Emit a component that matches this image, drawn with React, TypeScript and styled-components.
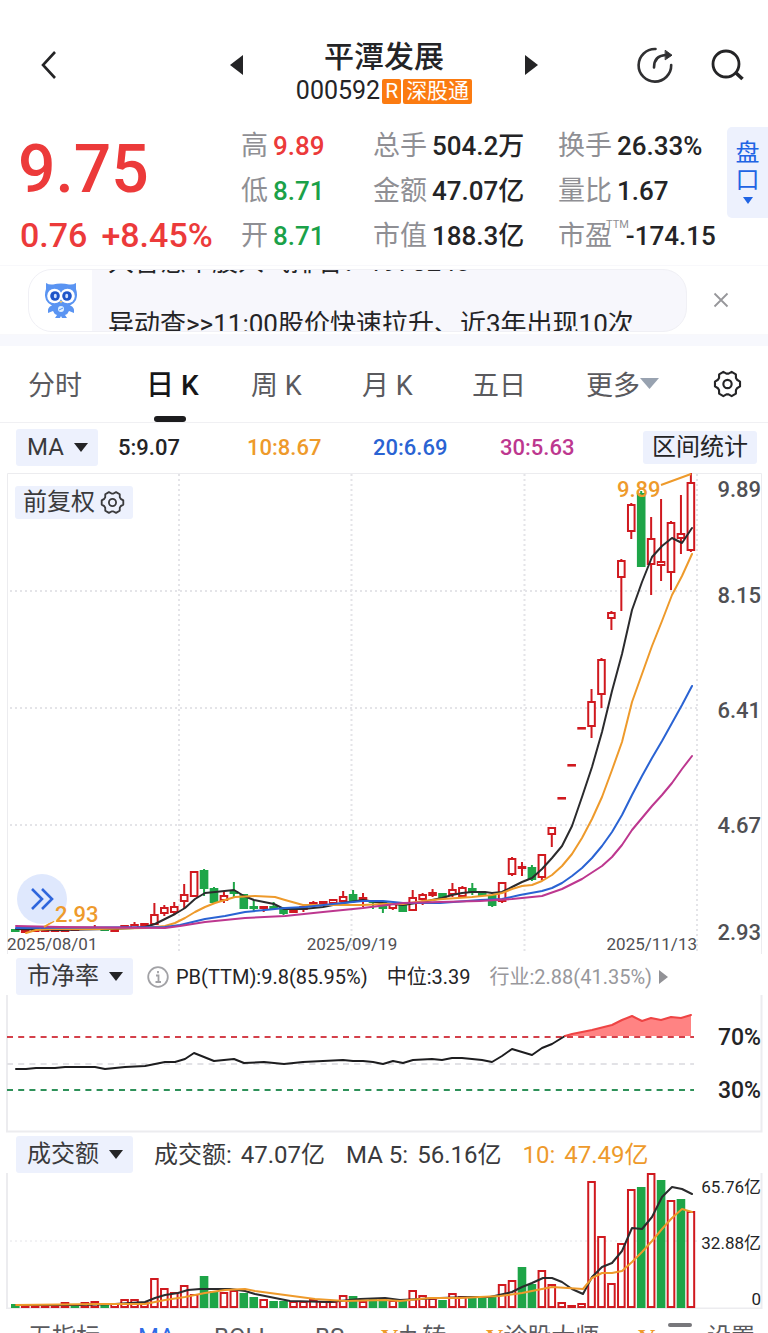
import React from "react";
import styled, { createGlobalStyle } from "styled-components";

const c = {
  ink: "#242426",
  text: "#3a3a3c",
  muted: "#8f8f94",
  axis: "#505054",
  red: "#ec3a3a",
  up: "#d0191f",
  green: "#1ba149",
  down: "#1ea548",
  orange: "#ee9a2b",
  blue: "#2a63d3",
  purple: "#bd378f",
  chip: "#edf1fd",
  line: "#ececef",
};

const Global = createGlobalStyle`
  *, *::before, *::after { box-sizing: border-box; }
  body {
    margin: 0;
    background: #fff;
    color: ${c.ink};
    font-family: Roboto, "Noto Sans CJK SC", sans-serif;
    font-size: 24px;
  }
  button, select { font: inherit; color: inherit; border: 0; padding: 0; margin: 0; background: none; cursor: pointer; }
  svg { display: block; }
`;

const Page = styled.main`
  width: 100%;
  overflow: hidden;
`;

/* ---------- header ---------- */

const Header = styled.header`
  display: grid;
  grid-template-columns: 1fr 308px 1fr;
  align-items: start;
  padding: 37px 24px 0;
`;

const IconGroup = styled.div<{ $end?: boolean }>`
  display: flex;
  justify-content: ${(p) => (p.$end ? "flex-end" : "flex-start")};
  gap: 36px;
  padding-left: ${(p) => (p.$end ? "0" : "14px")};
`;

const IconButton = styled.button`
  display: flex;
  align-items: center;
  justify-content: center;
  align-self: center;
  height: 56px;
`;

const Switcher = styled.div`
  display: flex;
  justify-content: space-between;

  > button { align-self: flex-start; }
`;

const Title = styled.h1`
  margin: 0;
  font-size: 30px;
  line-height: 40px;
  font-weight: 500;
  text-align: center;
`;

const CodeRow = styled.div`
  display: flex;
  align-items: center;
  justify-content: center;
  gap: 2px;
  height: 28px;
  font-size: 25px;
  line-height: 28px;
`;

const Badge = styled.span`
  padding: 0 3px;
  border-radius: 2px;
  background: #fb7b11;
  color: #fff;
  font-size: 21px;
  line-height: 25px;
`;

/* ---------- quote ---------- */

const Quote = styled.section`
  display: grid;
  grid-template-columns: 221fr 132fr 185fr 169fr 41px;
  padding: 19px 0 6px 20px;
`;

const Price = styled.div`
  color: ${c.red};
  font-size: 66px;
  line-height: 92px;
  font-weight: 500;
  margin-left: -2px;
`;

const Change = styled.div`
  display: flex;
  gap: 14px;
  color: ${c.red};
  font-size: 34px;
  line-height: 38px;
  font-weight: 500;
`;

const Stats = styled.dl`
  margin: 0;
`;

const Stat = styled.div`
  display: flex;
  height: 45px;
  line-height: 45px;
  white-space: nowrap;
`;

const StatLabel = styled.dt`
  color: ${c.muted};
  font-size: 27px;
`;

const StatValue = styled.dd<{ $color?: string }>`
  margin: 0;
  padding-left: 5px;
  color: ${(p) => p.$color ?? c.ink};
  font-size: 26px;
  font-weight: 500;
`;

const Ttm = styled.sup`
  margin: 5px -8px 0 -6px;
  color: ${c.muted};
  font-size: 11px;
  line-height: 12px;
`;

const OrderBook = styled.button`
  display: flex;
  flex-direction: column;
  align-items: center;
  height: 91px;
  margin-top: 3px;
  padding-top: 13px;
  border-radius: 5px 0 0 5px;
  background: ${c.chip};
  color: #2064e4;
  font-size: 24px;
  line-height: 27px;

  svg { margin-top: 3px; }
`;

/* ---------- notice ---------- */

const Notice = styled.section`
  display: flex;
  align-items: center;
  height: 70px;
  padding: 0 39px 0 28px;
  border: solid #f8f8fb;
  border-width: 1px 0;
`;

const NoticeCard = styled.div`
  display: flex;
  flex: 1;
  height: 63px;
  margin-right: 26px;
  overflow: hidden;
  border: 1px solid #f0f0f5;
  border-radius: 24px;
  background: #f7f7fc;
`;

const Mascot = styled.div`
  display: flex;
  align-items: center;
  justify-content: center;
  width: 63px;
  background: #fff;
`;

const Ticker = styled.div`
  flex: 1;
  height: 62px;
  margin-left: 16px;
  overflow: hidden;
  font-size: 26px;
  line-height: 36px;
  white-space: nowrap;
`;

const TickerTrack = styled.div`
  display: flex;
  flex-direction: column;
  gap: 26px;
  margin-top: -26px;
`;

const Band = styled.div`
  height: 11px;
  background: #f7f8fd;
`;

/* ---------- period tabs ---------- */

const Periods = styled.nav`
  display: grid;
  grid-template-columns: 118fr 105fr 111fr 110fr 114fr 127fr 29px;
  height: 77px;
  padding: 0 26px 0 28px;
  border-bottom: 1px solid #f0f0f3;
`;

const Period = styled.button<{ $active?: boolean }>`
  position: relative;
  display: flex;
  align-items: center;
  justify-self: start;
  padding-bottom: 2px;
  color: ${(p) => (p.$active ? "#161618" : "#5a5a5e")};
  font-size: ${(p) => (p.$active ? 28 : 27)}px;
  font-weight: ${(p) => (p.$active ? 500 : 400)};

  &::after {
    content: "";
    display: ${(p) => (p.$active ? "block" : "none")};
    position: absolute;
    bottom: 0;
    left: 50%;
    width: 32px;
    height: 6px;
    margin-left: -18px;
    border-radius: 3px;
    background: #1c1c1e;
  }
`;

/* ---------- indicator rows ---------- */

const Row = styled.div<{ $h: number; $top?: number }>`
  display: flex;
  align-items: center;
  height: ${(p) => p.$h}px;
  padding: ${(p) => p.$top ?? 0}px 11px 0 16px;
  white-space: nowrap;
`;

const PickerBox = styled.label<{ $w: number }>`
  position: relative;
  display: flex;
  align-items: center;
  flex: none;
  width: ${(p) => p.$w}px;
  height: 37px;
  border-radius: 3px;
  background: ${c.chip};

  select {
    appearance: none;
    width: 100%;
    height: 37px;
    padding-left: 11px;
    color: ${c.text};
    font-size: 24px;
    line-height: 37px;
  }
  svg {
    position: absolute;
    right: 10px;
    pointer-events: none;
  }
`;

const Averages = styled.div`
  display: grid;
  flex: 1;
  grid-template-columns: 129fr 126fr 127fr 143fr;
  padding-left: 20px;
  font-size: 22px;
  font-weight: 500;
`;

const Tint = styled.span<{ $color: string }>`
  color: ${(p) => p.$color};
`;

const RangeButton = styled.button`
  flex: none;
  height: 33px;
  padding: 0 9px;
  border-radius: 3px;
  background: ${c.chip};
  font-size: 24px;
  line-height: 33px;
`;

const Valuation = styled.div`
  display: flex;
  align-items: center;
  gap: 19px;
  padding-left: 14px;
  font-size: 20px;
  line-height: 36px;
`;

const WithIcon = styled.span<{ $muted?: boolean }>`
  display: flex;
  align-items: center;
  gap: 7px;
  color: ${(p) => (p.$muted ? "#98989c" : c.ink)};
`;

const Turnover = styled.div`
  display: flex;
  gap: 21px;
  padding-left: 21px;
  font-size: 24px;
  line-height: 36px;
`;

const Pair = styled.span<{ $color?: string }>`
  display: flex;
  gap: 9px;
  color: ${(p) => p.$color ?? c.text};
`;

/* ---------- charts ---------- */

const ChartBox = styled.figure`
  position: relative;
  margin: 0;

  > svg {
    width: 100%;
    height: auto;
  }
`;

const AdjustButton = styled.button`
  position: absolute;
  top: 14px;
  left: 15px;
  display: flex;
  align-items: center;
  gap: 5px;
  height: 33px;
  padding: 0 8px;
  border-radius: 3px;
  background: ${c.chip};
  font-size: 24px;
  line-height: 33px;
  color: ${c.text};
`;

const ExpandButton = styled.button`
  position: absolute;
  bottom: 30px;
  left: 17px;
  display: flex;
  align-items: center;
  justify-content: center;
  width: 50px;
  height: 50px;
  border-radius: 50%;
  background: #dfe8fd;
`;

const LowMark = styled.span`
  position: absolute;
  left: 55px;
  bottom: 26px;
  color: ${c.orange};
  font-size: 22px;
  font-weight: 500;
  line-height: 26px;
`;

/* ---------- bottom bar ---------- */

const BottomBar = styled.nav`
  display: grid;
  grid-template-columns: 110fr 76fr 101fr 66fr 105fr 152fr 30fr 39fr 50fr;
  height: 24px;
  padding: 13px 11px 0 28px;
  overflow: hidden;
`;

const BottomItem = styled.button<{ $active?: boolean }>`
  display: flex;
  justify-self: start;
  height: 30px;
  color: ${(p) => (p.$active ? "#2f6be6" : "#5a5a5e")};
  font-size: 24px;
  line-height: 30px;
  white-space: nowrap;
`;

const Vip = styled.b`
  color: ${c.orange};
  font-family: "Liberation Serif", serif;
`;

const Handle = styled.span`
  width: 24px;
  height: 4px;
  margin-top: 1px;
  border-radius: 2px;
  background: #77777b;
`;

/* ---------- icons ---------- */

const polar = (r: number, deg: number) => {
  const a = (deg * Math.PI) / 180;
  return `${(15 + r * Math.cos(a)).toFixed(2)} ${(15 + r * Math.sin(a)).toFixed(2)}`;
};

const gearPath =
  "M" +
  [0, 60, 120, 180, 240, 300]
    .map((a) => [polar(13.2, a - 11), polar(13.2, a + 11), polar(10.8, a + 24), polar(10.8, a + 36)].join(" L"))
    .join(" L") +
  " Z";

const Gear = ({ size, color = c.ink }: { size: number; color?: string }) => (
  <svg width={size} height={size} viewBox="0 0 30 30" fill="none" stroke={color} strokeWidth="2.2" strokeLinejoin="round" aria-hidden="true">
    <path d={gearPath} />
    <circle cx="15" cy="15" r="4.3" />
  </svg>
);

const Caret = ({ w = 14, h = 9, color = c.ink }: { w?: number; h?: number; color?: string }) => (
  <svg width={w} height={h} viewBox="0 0 14 9" preserveAspectRatio="none" aria-hidden="true">
    <path d="M0 0H14L7 9Z" fill={color} />
  </svg>
);

const Side = ({ w, h, left, color = c.ink }: { w: number; h: number; left?: boolean; color?: string }) => (
  <svg width={w} height={h} viewBox="0 0 10 16" preserveAspectRatio="none" aria-hidden="true">
    <path d={left ? "M10 0V16L0 8Z" : "M0 0V16L10 8Z"} fill={color} />
  </svg>
);

const Owl = () => (
  <svg width="38" height="40" viewBox="0 0 38 40" aria-hidden="true">
    <path d="M4 3Q7 5 11 4.500Q19 2.500 27 4.500Q31 5 34 3L34 9Q36 15 34 20Q32 24 28 25.500Q33 27 32 33L27 31Q26 34 23 35L25 38H20L19 36L18 38H13L15 35Q12 34 11 31L6 33Q5 27 10 25.500Q6 24 4 20Q2 15 4 9Z" fill="#5a94f2" />
    <circle cx="12.5" cy="16" r="7.3" fill="#fff" />
    <circle cx="25.5" cy="16" r="7.3" fill="#fff" />
    <circle cx="13" cy="16" r="4.8" fill="#1f55c9" />
    <circle cx="25" cy="16" r="4.8" fill="#1f55c9" />
    <ellipse cx="13.3" cy="16" rx="1.5" ry="2.3" fill="#cfe0ff" />
    <ellipse cx="24.7" cy="16" rx="1.5" ry="2.3" fill="#cfe0ff" />
    <path d="M17.500 21H20.500L19 23.500Z" fill="#f2c66d" />
    <circle cx="19" cy="29" r="3" fill="#dff0ff" />
    <path d="M17 30L21 28" stroke="#5a94f2" />
  </svg>
);

/* ---------- chart data ---------- */

const xAt = (i: number) => 15.3 + i * 9.935;

type Candle = [up: 0 | 1, top: number, bottom: number, high: number, low: number];

const candles: Candle[] = [
  [0, 458, 459, 458, 459], [1, 458, 460, 457, 461], [1, 457, 459, 457, 459], [1, 457, 459, 457, 459], [1, 457, 459, 457, 459],
  [1, 458, 459, 457, 459], [1, 457, 458, 456, 458], [1, 456, 457, 456, 458], [1, 456, 457, 453, 458], [0, 457, 458, 457, 458],
  [1, 458, 459, 458, 459], [1, 454, 456, 453, 457], [1, 453, 456, 450, 456], [1, 452, 454, 451, 455], [1, 443, 452, 431, 453],
  [1, 436, 441, 433, 444], [1, 435, 440, 430, 443], [1, 423, 429, 412, 436], [1, 400, 424, 399, 425], [0, 399, 416, 397, 424],
  [0, 417, 430, 415, 430], [1, 424, 428, 419, 431], [0, 420, 421, 410, 426], [0, 423, 436, 422, 437], [0, 435, 436, 428, 439],
  [1, 435, 436, 434, 440], [0, 435, 436, 430, 437], [0, 436, 441, 436, 443], [1, 438, 440, 437, 441], [1, 435, 437, 434, 440],
  [1, 431, 433, 429, 434], [1, 430, 432, 429, 433], [1, 428, 431, 428, 432], [1, 425, 429, 419, 430], [0, 423, 429, 418, 431],
  [1, 426, 427, 421, 435], [0, 429, 430, 428, 437], [0, 431, 436, 430, 441], [1, 432, 436, 431, 438], [0, 433, 439, 432, 439],
  [1, 426, 438, 418, 439], [1, 423, 427, 421, 433], [1, 421, 423, 417, 425], [0, 422, 426, 421, 427], [1, 418, 422, 411, 425],
  [1, 416, 424, 414, 426], [0, 417, 419, 411, 423], [0, 421, 423, 420, 424], [0, 424, 433, 423, 435], [1, 411, 429, 410, 431],
  [1, 387, 402, 385, 404], [1, 395, 396, 390, 404], [0, 396, 407, 393, 409], [1, 383, 405, 382, 408], [1, 356, 362, 355, 375],
  [1, 326, 326, 325, 327], [1, 293, 293, 292, 294], [1, 256, 256, 256, 257], [1, 230, 254, 217, 266], [1, 188, 222, 186, 236],
  [1, 141, 146, 139, 158], [1, 89, 105, 87, 139], [1, 33, 59, 31, 67], [0, 22, 94, 19, 95], [1, 67, 92, 45, 123],
  [1, 90, 93, 27, 109], [1, 51, 100, 49, 118], [1, 62, 66, 23, 82], [1, 11, 78, 1, 80],
];

const ma5 = "16,457 60,458 110,457 135,456 145,455 155,452 165,447 175,442 185,436 195,427 205,421 215,420 234,418 244,424 254,428 264,430 274,432 284,437 303,437 323,435 343,431 363,428 383,431 403,433 423,430 432,428 442,426 452,423 462,421 472,420 485,420 492,421 502,420 512,415 522,410 532,406 542,397 552,386 562,374 572,354 582,325 592,295 602,260 612,219 622,182 632,138 642,110 652,85 662,74 672,66 682,71 692,56";
const ma10 = "26,461 36,458 50,457 100,457 145,456 165,454 175,451 185,446 195,440 205,435 215,431 225,428 235,425 255,424 275,425 285,428 303,433 330,433 363,433 383,432 403,432 423,429 443,427 472,425 492,423 502,421 512,417 522,414 532,413 542,409 552,403 562,394 572,382 582,366 592,347 602,325 612,298 622,270 632,230 642,202 652,174 662,149 672,123 682,104 692,82";
const ma20 = "16,456 165,455 180,453 205,447 225,444 245,440 265,438 285,436 305,435 333,432 363,429 383,429 403,431 440,431 480,428 502,427 520,423 542,419 552,416 562,411 572,404 582,396 592,386 602,374 612,360 622,343 632,323 642,304 652,286 662,269 672,251 682,233 692,214";
const ma30 = "16,454 60,455 165,456 180,454 205,450 245,446 285,444 323,440 363,436 403,431 440,430 480,429 512,427 542,424 562,417 582,407 602,394 612,385 622,373 632,358 642,346 652,334 662,323 672,311 682,297 692,284";

const volumes: [up: 0 | 1, height: number][] = [
  [0, 3], [1, 3], [1, 3], [1, 3], [1, 3], [1, 5], [0, 3], [1, 5], [1, 6], [0, 3], [1, 4], [1, 8], [1, 8], [1, 5],
  [1, 29], [1, 19], [1, 15], [1, 22], [1, 13], [0, 31], [0, 16], [1, 15], [1, 17], [0, 14], [0, 10], [1, 8], [0, 6],
  [0, 6], [1, 6], [1, 6], [1, 8], [1, 6], [1, 6], [1, 12], [0, 11], [1, 6], [0, 8], [0, 8], [1, 7], [0, 6], [1, 17],
  [1, 12], [1, 9], [0, 7], [1, 14], [1, 11], [0, 10], [0, 9], [0, 10], [1, 23], [1, 27], [0, 40], [0, 23], [1, 37],
  [1, 23], [1, 5], [1, 2], [1, 4], [1, 126], [1, 71], [1, 24], [1, 64], [1, 118], [0, 120], [1, 134], [0, 127],
  [1, 107], [0, 108], [1, 96],
];

const vol5 = "16,132 80,132 115,131 145,129 155,125 165,122 178,120 188,117 200,116 230,116 245,118 255,121 265,123 290,128 330,129 360,126 385,125 400,127 440,125 470,124 490,124 512,119 522,114 532,110 543,105 552,105 562,109 572,116 583,121 592,104 602,94 612,90 622,78 632,55 642,56 652,44 662,24 672,14 682,16 692,21";
const vol10 = "16,132 100,131 145,131 165,127 185,124 205,120 225,117 245,116 255,118 285,122 315,126 345,128 385,127 400,128 430,125 460,125 500,123 522,120 552,114 583,116 592,105 602,100 612,100 622,98 632,89 642,79 652,68 662,56 672,45 682,36 692,39";

const pbBase = "16,74 26,74 36,73 55,73 65,72 95,72 105,74 125,72 145,71 155,69 165,67 175,67 185,64 194,58 204,62 214,66 224,65 234,64 244,68 264,67 284,69 303,67 323,66 343,65 353,66 363,66 373,67 383,69 393,66 403,68 413,65 432,64 442,65 452,63 462,63 482,65 492,67 502,61 512,54 522,57 532,60 542,53 552,49 565,41";
const pbHigh = "565,41 572,39 592,35 612,30 622,25 632,21 642,26 651,23 661,25 671,22 681,23 691,20";

const AxisText = styled.text<{ $size: number; $color?: string; $weight?: number }>`
  font-family: Roboto, "Noto Sans CJK SC", sans-serif;
  font-size: ${(p) => p.$size}px;
  font-weight: ${(p) => p.$weight ?? 400};
  fill: ${(p) => p.$color ?? c.axis};
`;

const Curve = styled.polyline<{ $color: string }>`
  fill: none;
  stroke: ${(p) => p.$color};
  stroke-width: 2;
  stroke-linejoin: round;
  stroke-linecap: round;
`;

const priceTicks: [string, number][] = [["9.89", 25], ["8.15", 131], ["6.41", 246], ["4.67", 361], ["2.93", 468]];

const PriceChart = () => (
  <svg viewBox="0 0 768 482" role="img" aria-label="日K线图">
    <path d="M7.500 482V1.500H761.500V482" stroke={c.line} fill="none" />
    <path d="M10 119H697M10 236H697M10 353H697M179 2V482M351.500 2V482M524.500 2V482M697 2V482" fill="none" stroke="#e4e4e8" strokeWidth="2" strokeDasharray="2 3" />
    {candles.map(([up, top, bottom, high, low], i) => {
      const x = xAt(i);
      const tone = up ? c.up : c.down;
      return (
        <g key={i} stroke={tone} strokeWidth="2">
          <path d={`M${x} ${high}V${top}M${x} ${bottom}V${low}`} />
          <rect x={x - 3.3} y={top} width="6.6" height={Math.max(bottom - top, 0.6)} fill={up ? "#fff" : tone} />
        </g>
      );
    })}
    <Curve $color="#2b2b2d" points={ma5} />
    <Curve $color={c.orange} points={ma10} />
    <Curve $color={c.blue} points={ma20} />
    <Curve $color={c.purple} points={ma30} />
    <path d="M661 13L691 2M44 455L54 449" stroke={c.orange} strokeWidth="2" />
    <AxisText x="617" y="25" $size={22} $weight={500} $color={c.orange}>9.89</AxisText>
    {priceTicks.map(([t, y]) => (
      <AxisText key={t} x="761" y={y} textAnchor="end" $size={22} $weight={500}>{t}</AxisText>
    ))}
    <AxisText x="7" y="478" $size={17}>2025/08/01</AxisText>
    <AxisText x="352" y="478" textAnchor="middle" $size={17}>2025/09/19</AxisText>
    <AxisText x="697" y="478" textAnchor="end" $size={17}>2025/11/13</AxisText>
  </svg>
);

const ValuationChart = () => (
  <svg viewBox="0 0 768 138" role="img" aria-label="市净率走势">
    <path d="M7 0V136.500H761.500V0" fill="none" stroke={c.line} strokeWidth="2" />
    <polygon points={`${pbHigh} 691,41`} fill="#ff8383" />
    <g strokeWidth="2" strokeDasharray="6 5.2">
      <path d="M7 42H694" stroke="#d4404a" />
      <path d="M7 69H694" stroke="#e2e2e6" />
      <path d="M7 95H694" stroke="#2e9159" />
    </g>
    <Curve $color="#1d1d1f" points={pbBase} />
    <Curve $color="#ee4444" points={pbHigh} />
    <AxisText x="761" y="50" textAnchor="end" $size={23} $weight={500} $color={c.ink}>70%</AxisText>
    <AxisText x="761" y="103" textAnchor="end" $size={23} $weight={500} $color={c.ink}>30%</AxisText>
  </svg>
);

const VolumeChart = () => (
  <svg viewBox="0 0 768 136" role="img" aria-label="成交额柱状图">
    <path d="M7 0V135.500H761.500V0" fill="none" stroke={c.line} strokeWidth="2" />
    <path d="M10 68H697" stroke="#e4e4e8" strokeDasharray="2 3" />
    {volumes.map(([up, h], i) => {
      const tone = up ? c.up : c.down;
      return (
        <rect key={i} x={xAt(i) - 3.3} y={135 - h} width="6.6" height={h - 1} fill={up ? "#fff" : tone} stroke={tone} strokeWidth="2" />
      );
    })}
    <Curve $color="#2b2b2d" points={vol5} />
    <Curve $color={c.orange} points={vol10} />
    <AxisText x="761" y="20" textAnchor="end" $size={17} $color={c.ink}>65.76亿</AxisText>
    <AxisText x="761" y="76" textAnchor="end" $size={17} $color={c.ink}>32.88亿</AxisText>
    <AxisText x="761" y="132" textAnchor="end" $size={17} $color={c.ink}>0</AxisText>
  </svg>
);

const Picker = ({ label, width, options }: { label: string; width: number; options: string[] }) => (
  <PickerBox $w={width}>
    <select aria-label={label} defaultValue={options[0]}>
      {options.map((o) => (
        <option key={o}>{o}</option>
      ))}
    </select>
    <Caret />
  </PickerBox>
);

const statColumns: { label: string; value: string; color?: string; ttm?: boolean }[][] = [
  [
    { label: "高", value: "9.89", color: c.red },
    { label: "低", value: "8.71", color: c.green },
    { label: "开", value: "8.71", color: c.green },
  ],
  [
    { label: "总手", value: "504.2万" },
    { label: "金额", value: "47.07亿" },
    { label: "市值", value: "188.3亿" },
  ],
  [
    { label: "换手", value: "26.33%" },
    { label: "量比", value: "1.67" },
    { label: "市盈", value: "-174.15", ttm: true },
  ],
];

export default function App() {
  return (
    <>
      <Global />
      <Page>
        <Header>
          <IconGroup>
            <IconButton aria-label="返回">
              <svg width="22" height="30" viewBox="0 0 22 30" fill="none" stroke={c.ink} strokeWidth="2.6" aria-hidden="true">
                <path d="M17 2L5 15L17 28" />
              </svg>
            </IconButton>
          </IconGroup>
          <Switcher>
            <IconButton aria-label="上一只"><Side w={13} h={20} left /></IconButton>
            <div>
              <Title>平潭发展</Title>
              <CodeRow>
                <span>000592</span>
                <Badge>R</Badge>
                <Badge>深股通</Badge>
              </CodeRow>
            </div>
            <IconButton aria-label="下一只"><Side w={13} h={20} /></IconButton>
          </Switcher>
          <IconGroup $end>
            <IconButton aria-label="分享">
              <svg width="38" height="38" viewBox="0 0 38 38" fill="none" stroke="#303032" strokeWidth="2.6" strokeLinecap="round" aria-hidden="true">
                <path d="M19.500 3A16.300 16.300 0 1 0 35.200 19" />
                <path d="M18 21.500C18 14 21.500 9.500 29.500 9" />
                <path d="M29.500 4.500L36 9.200L29.500 13.600Z" fill="#303032" strokeWidth="1" />
              </svg>
            </IconButton>
            <IconButton aria-label="搜索">
              <svg width="34" height="34" viewBox="0 0 34 34" fill="none" stroke={c.ink} strokeWidth="2.8" aria-hidden="true">
                <circle cx="16" cy="16" r="13" />
                <path d="M25.500 24.500L32.500 31" strokeWidth="3.6" />
              </svg>
            </IconButton>
          </IconGroup>
        </Header>

        <Quote>
          <div>
            <Price>9.75</Price>
            <Change><span>0.76</span><span>+8.45%</span></Change>
          </div>
          {statColumns.map((col, i) => (
            <Stats key={i}>
              {col.map((s) => (
                <Stat key={s.label}>
                  <StatLabel>{s.label}</StatLabel>
                  {s.ttm && <Ttm>TTM</Ttm>}
                  <StatValue $color={s.color}>{s.value}</StatValue>
                </Stat>
              ))}
            </Stats>
          ))}
          <OrderBook>
            <span>盘</span>
            <span>口</span>
            <Caret w={10} h={7} color="#2064e4" />
          </OrderBook>
        </Quote>

        <Notice>
          <NoticeCard>
            <Mascot><Owl /></Mascot>
            <Ticker>
              <TickerTrack>
                <div>大智慧个股人气排名：1978240</div>
                <div>异动查&gt;&gt;11:00股价快速拉升、近3年出现10次</div>
              </TickerTrack>
            </Ticker>
          </NoticeCard>
          <IconButton aria-label="关闭">
            <svg width="16" height="16" viewBox="0 0 16 16" stroke="#97979b" strokeWidth="1.8" aria-hidden="true">
              <path d="M1.500 1.500L14.500 14.500M14.500 1.500L1.500 14.500" />
            </svg>
          </IconButton>
        </Notice>
        <Band />

        <Periods>
          <Period>分时</Period>
          <Period $active>日 K</Period>
          <Period>周 K</Period>
          <Period>月 K</Period>
          <Period>五日</Period>
          <Period>更多<Caret w={19} h={11} color="#98a2b0" /></Period>
          <IconButton aria-label="设置"><Gear size={30} /></IconButton>
        </Periods>

        <Row $h={49}>
          <Picker label="主图指标" width={82} options={["MA", "BOLL"]} />
          <Averages>
            <span>5:9.07</span>
            <Tint $color={c.orange}>10:8.67</Tint>
            <Tint $color={c.blue}>20:6.69</Tint>
            <Tint $color={c.purple}>30:5.63</Tint>
          </Averages>
          <RangeButton>区间统计</RangeButton>
        </Row>

        <ChartBox>
          <PriceChart />
          <AdjustButton>前复权<Gear size={25} color={c.text} /></AdjustButton>
          <ExpandButton aria-label="展开">
            <svg width="24" height="24" viewBox="0 0 24 24" fill="none" stroke="#2f66dc" strokeWidth="2.6" aria-hidden="true">
              <path d="M2 2L12 12L2 22M12 2L22 12L12 22" />
            </svg>
          </ExpandButton>
          <LowMark>2.93</LowMark>
        </ChartBox>

        <Row $h={41} $top={4}>
          <Picker label="估值指标" width={117} options={["市净率", "市盈率"]} />
          <Valuation>
            <WithIcon>
              <svg width="22" height="22" viewBox="0 0 22 22" fill="none" stroke="#a2a2a6" strokeWidth="1.8" aria-hidden="true">
                <circle cx="11" cy="11" r="9.8" />
                <path d="M9 9.500H11.500V16M8.500 16H14M11 5V7.200" />
              </svg>
              PB(TTM):9.8(85.95%)
            </WithIcon>
            <span>中位:3.39</span>
            <WithIcon $muted>行业:2.88(41.35%)<Side w={9} h={14} color="#929296" /></WithIcon>
          </Valuation>
        </Row>
        <ChartBox><ValuationChart /></ChartBox>

        <Row $h={40} $top={3}>
          <Picker label="成交指标" width={117} options={["成交额", "成交量"]} />
          <Turnover>
            <Pair><span>成交额:</span><span>47.07亿</span></Pair>
            <Pair><span>MA 5:</span><span>56.16亿</span></Pair>
            <Pair $color={c.orange}><span>10:</span><span>47.49亿</span></Pair>
          </Turnover>
        </Row>
        <ChartBox><VolumeChart /></ChartBox>

        <BottomBar>
          <BottomItem>无指标</BottomItem>
          <BottomItem $active>MA</BottomItem>
          <BottomItem>BOLL</BottomItem>
          <BottomItem>BS</BottomItem>
          <BottomItem><Vip>V</Vip>九转</BottomItem>
          <BottomItem><Vip>V</Vip>诊股大师</BottomItem>
          <BottomItem><Vip>V</Vip></BottomItem>
          <Handle />
          <BottomItem>设置</BottomItem>
        </BottomBar>
      </Page>
    </>
  );
}
